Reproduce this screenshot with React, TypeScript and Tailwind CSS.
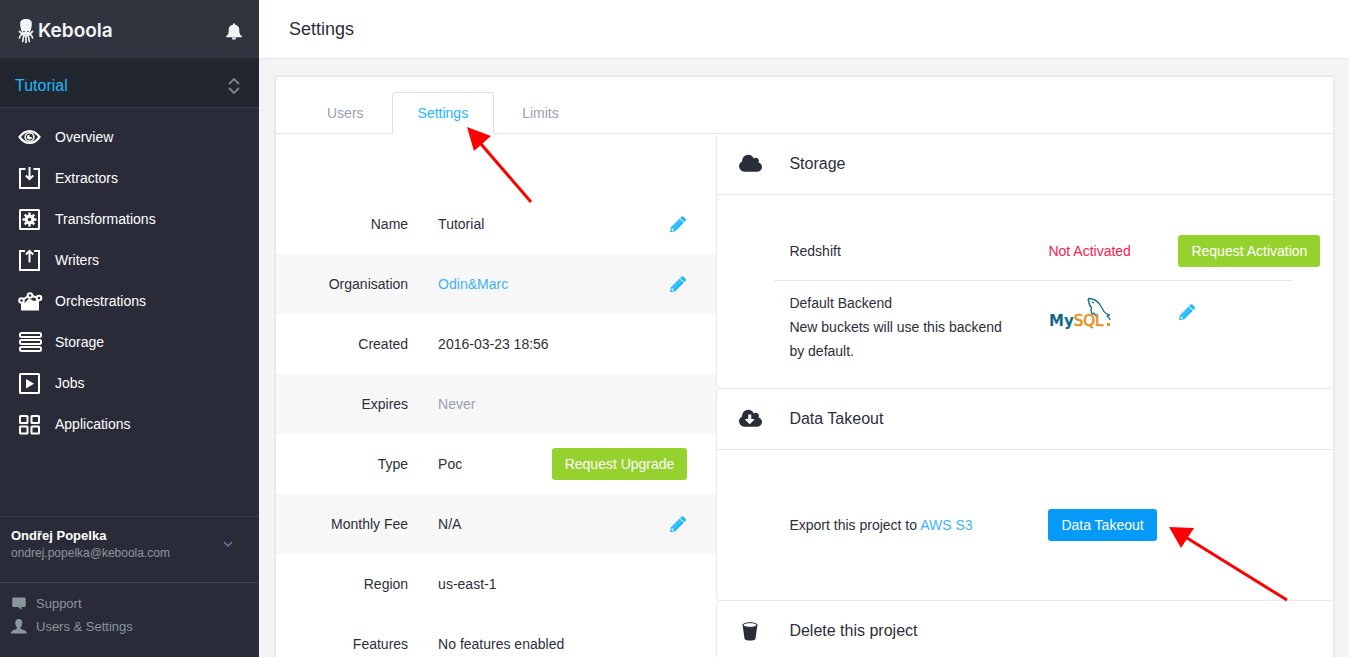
import type { ReactNode } from "react";

const cloudPath =
  "M1920 1152q0 159-112.5 271.5t-271.5 112.5h-1088q-185 0-316.5-131.5t-131.5-316.5q0-132 71-241.5t187-163.5q-2-28-2-43 0-212 150-362t362-150q158 0 286.5 88t187.5 230q70-62 166-62 106 0 181 75t75 181q0 75-41 138 129 30 213 134.5t84 239.5z";
const downArrowPath =
  "M1280 928q0-14-9-23t-23-9h-224v-352q0-13-9.5-22.5t-22.5-9.5h-192q-13 0-22.5 9.5t-9.5 22.5v352h-224q-13 0-22.5 9.5t-9.5 22.5q0 14 9 23l352 352q9 9 23 9t23-9l351-351q10-12 10-24z";

function OctopusLogo() {
  return (
    <svg width="16" height="26" viewBox="0 0 16 26" fill="none" stroke="#f4f5f7" strokeLinecap="round" aria-hidden="true">
      <path d="M8 1c4 0 5.800 1.500 5.800 4.500 0 3-.5 5-1.300 7.500l-1.500 3.500H5L3.500 13C2.700 10.500 2.200 8.500 2.200 5.500 2.200 2.500 4 1 8 1z" fill="#f4f5f7" stroke="none" />
      <path d="M1.500 13.500q1.500 2.500 4 2.500M14.500 13.500q-1.500 2.500-4 2.500M5.500 16.500q-3.500 0-4 3.500M10.500 16.500q3.500 0 4 3.500M6.500 17q-1.500 2-1.800 6.500M9.500 17q1.500 2 1.800 6.500M8 17v7.500" strokeWidth="1.700" />
      <circle cx="6" cy="13.500" r=".8" fill="#2d333e" stroke="none" />
      <circle cx="10" cy="13.500" r=".8" fill="#2d333e" stroke="none" />
    </svg>
  );
}

function BellIcon() {
  return (
    <svg width="16" height="17" viewBox="0 0 16 17" fill="#f4f5f7" aria-hidden="true">
      <path d="M7 1.800V.6h2v1.200c3 .4 4.300 2.400 4.300 5.200 0 3.500.7 4.900 2.500 6.100v1.200H.2v-1.200C2 11.900 2.700 10.500 2.700 7c0-2.800 1.300-4.800 4.300-5.200z" />
      <path d="M5.800 14.500h4.400a2.200 2.200 0 0 1-4.400 0z" />
    </svg>
  );
}

const navIcons: Record<string, ReactNode> = {
  Overview: (
    <>
      <path d="M2.500 12Q7 6 12.500 6t10 6q-4.500 6-10 6t-10-6z" strokeWidth="2.200" />
      <circle cx="12.500" cy="12" r="4.300" strokeWidth="1.600" />
      <path d="M12.500 9.500a2.500 2.500 0 1 0 2.500 2.500h-2.500z" fill="#fff" stroke="none" />
    </>
  ),
  Extractors: (
    <path d="M8.500 3H3v19h19V3h-5.500M12.500 1v12M8.800 9.500l3.700 3.700 3.700-3.700" strokeWidth="2" />
  ),
  Transformations: (
    <>
      <rect x="3" y="3" width="19" height="19" rx=".5" strokeWidth="2" />
      <circle cx="12.500" cy="12.500" r="3.300" strokeWidth="3" />
      <path d="M12.500 5.500v3M12.500 16.500v3M5.500 12.500h3M16.500 12.500h3M7.700 7.700l2 2M15.300 15.300l2 2M17.300 7.700l-2 2M9.700 15.300l-2 2" strokeWidth="2.400" />
    </>
  ),
  Writers: (
    <path d="M8 3H3v19h19V3h-5M12.500 14.500V3M8.800 6.500l3.700-3.700 3.700 3.700" strokeWidth="2" />
  ),
  Orchestrations: (
    <>
      <path d="M4 21.500v-7l4-1 4-4 5 2.500 5-1.500v11z" fill="#fff" stroke="none" />
      <g strokeWidth="2">
        <path d="M7 10l3.500-2.500M15.500 7l4 1.500" />
        <circle cx="4.500" cy="11.500" r="2.300" fill="#292c38" />
        <circle cx="13" cy="6.500" r="2.300" fill="#292c38" />
        <circle cx="22" cy="9" r="2.300" fill="#292c38" />
      </g>
    </>
  ),
  Storage: (
    <g strokeWidth="2">
      <rect x="3" y="3" width="21" height="4" rx="1.500" />
      <rect x="3" y="10" width="21" height="4" rx="1.500" />
      <rect x="3" y="17" width="21" height="4" rx="1.500" />
    </g>
  ),
  Jobs: (
    <>
      <rect x="3" y="3" width="19" height="19" rx=".5" strokeWidth="2" />
      <path d="M9 8v9.500l8-4.750z" fill="#fff" stroke="none" />
    </>
  ),
  Applications: (
    <g strokeWidth="2">
      <rect x="3" y="4" width="7.500" height="7" rx=".5" />
      <rect x="14.500" y="4" width="7.500" height="7" rx=".5" />
      <rect x="3" y="14.500" width="7.500" height="7" rx=".5" />
      <rect x="14.500" y="14.500" width="7.500" height="7" rx=".5" />
    </g>
  ),
};

function Pencil({ label }: { label: string }) {
  return (
    <button type="button" aria-label={label} className="block cursor-pointer">
      <svg width="18" height="18" viewBox="0 0 18 18" aria-hidden="true">
        <path d="M12.200 1.800Q13.300.6 14.500 1.700l2 2q1 1.100 0 2.200l-1.200 1.200-4.200-4.200zM10.500 3.500l4.200 4.200-8.500 8.600L1 17.200l1-5.100z" fill="#1eb8ff" />
        <path d="M3.500 11.800l7.200-7.200M4.900 13.200l7.200-7.200" stroke="#fff" strokeWidth=".5" opacity=".6" />
        <path d="M2.800 13.600l1.700.2.300 1.700-1.700.3-.7-.7z" fill="#fff" />
      </svg>
    </button>
  );
}

function MySqlLogo() {
  return (
    <svg width="64" height="38" viewBox="0 0 64 38" role="img" aria-label="MySQL">
      <g fill="none" stroke="#12688a" strokeWidth="1.300" strokeLinecap="round" strokeLinejoin="round">
        <path d="M49 21.500q-2-1-3-3.500-1 2-2.500 0-1-2.500 0-5.500-3-3-2.500-6-2-2.500.5-3 7 .5 11 7 2 3.500 3.500 6 1.500 2.500 5.500 3.500l-2.500 1q2 1.500 3 3.500" />
        <path d="M44.500 7l.8.800" />
      </g>
      <text x="1" y="31" fontFamily="DejaVu Sans, sans-serif" fontSize="15">
        <tspan fill="#12688a" fontWeight="700">My</tspan>
        <tspan fill="#e69122" stroke="#e69122" strokeWidth=".7">SQL</tspan>
      </text>
      <rect x="59" y="28" width="3" height="3" fill="#e69122" />
    </svg>
  );
}

function Sidebar() {
  return (
    <aside className="flex w-[259px] shrink-0 flex-col bg-[#292c38]">
      <header className="flex h-[60px] items-center justify-between border-b-2 border-[#23262f] bg-[#2f343f] pt-1 pr-[17px] pl-[18px]">
        <a href="#home" className="flex items-center gap-1 font-['Inter'] text-[19px] leading-6 font-semibold text-[#f4f5f7]">
          <OctopusLogo />
          Keboola
        </a>
        <button type="button" aria-label="Notifications"><BellIcon /></button>
      </header>
      <button type="button" className="flex h-12 items-center justify-between border-b border-[#373c48] bg-[#22262e] pt-1 pr-[18px] pl-[15px] text-base text-[#1eb8ff]">
        Tutorial
        <svg width="14" height="18" viewBox="0 0 14 18" fill="none" stroke="#7b8794" strokeWidth="1.800" aria-hidden="true">
          <path d="M2 7l5-5 5 5M2 11l5 5 5-5" />
        </svg>
      </button>
      <nav className="flex flex-1 flex-col pt-2">
        {Object.keys(navIcons).map((name) => (
          <a key={name} href={`#${name.toLowerCase()}`} className="flex h-[41px] items-center gap-3 pl-[17px] text-sm text-white">
            <svg width="26" height="24" viewBox="0 0 26 24" fill="none" stroke="#fff" aria-hidden="true">{navIcons[name]}</svg>
            {name}
          </a>
        ))}
      </nav>
      <button type="button" className="flex h-[66px] items-center justify-between border-t border-[#3a3f4a] pr-[25px] pb-3 pl-[11px] text-left">
        <span className="block">
          <span className="block text-[13px] leading-[18px] font-bold text-white">Ondřej Popelka</span>
          <span className="block text-xs leading-4 text-[#8b959c]">ondrej.popelka@keboola.com</span>
        </span>
        <svg width="12" height="8" viewBox="0 0 12 8" fill="none" stroke="#64789f" strokeWidth="1.500" aria-hidden="true"><path d="M2 2l4 4 4-4" /></svg>
      </button>
      <div className="h-[75px] border-t border-[#3a3f4a] pt-[9px] pl-[11px] text-[13px] leading-[23px] text-[#8b959c]">
        <a href="#support" className="flex items-center gap-[9px]">
          <svg width="16" height="16" viewBox="0 0 16 16" fill="#8b959c" aria-hidden="true"><path d="M2.500 1.500h11q1.200 0 1.200 1v7.500q0 1-1.200 1h-3V14l-3.500-3H2.500q-1.200 0-1.200-1V2.500q0-1 1.200-1z" /></svg>
          Support
        </a>
        <a href="#users" className="flex items-center gap-[9px]">
          <svg width="16" height="16" viewBox="0 0 16 16" fill="#8b959c" aria-hidden="true"><path d="M7.800 0c2.500 0 3.700 1.700 3.500 4-.1 2-.8 3.200-1.700 4.200 0 1.600.3 2 1.700 2.400 2.200.8 4.200 1 4.500 4H0c.2-3 2-3.200 4.300-4 1.300-.4 1.600-.8 1.600-2.400-1-1-1.600-2.200-1.700-4.200C4 1.700 5.300 0 7.800 0z" /></svg>
          Users &amp; Settings
        </a>
      </div>
    </aside>
  );
}

const link = "text-[#3eb4f5]";
const greenButton = "h-8 rounded-[3px] bg-[#96d22d] px-[13px] text-sm whitespace-nowrap text-white";

function Properties() {
  const rows: { name: string; value: ReactNode; action?: ReactNode; shaded?: boolean }[] = [
    { name: "Name", value: "Tutorial", action: <Pencil label="Edit name" /> },
    { name: "Organisation", value: <a href="#organisation" className={link}>Odin&amp;Marc</a>, action: <Pencil label="Edit organisation" />, shaded: true },
    { name: "Created", value: "2016-03-23 18:56" },
    { name: "Expires", value: <span className="text-[#9a9fb2]">Never</span>, shaded: true },
    { name: "Type", value: "Poc", action: <button type="button" className={greenButton}>Request Upgrade</button> },
    { name: "Monthly Fee", value: "N/A", action: <Pencil label="Edit monthly fee" />, shaded: true },
    { name: "Region", value: "us-east-1" },
    { name: "Features", value: "No features enabled" },
  ];
  return (
    <div className="col-span-5 pt-[60px]">
      <table className="w-full table-fixed">
        <tbody>
          {rows.map((row) => (
            <tr key={row.name} className={row.shaded ? "h-[60px] bg-[#f7f7f7]" : "h-[60px]"}>
              <th scope="row" className="w-[30%] text-right font-normal">{row.name}</th>
              <td className="pl-[30px] whitespace-nowrap">{row.value}</td>
              <td className="w-[38%] pr-[29px]"><div className="flex justify-end">{row.action}</div></td>
            </tr>
          ))}
        </tbody>
      </table>
    </div>
  );
}

function Section({ title, icon, children }: { title: string; icon: ReactNode; children?: ReactNode }) {
  return (
    <section className="rounded-sm border-b border-l border-[#e6e7eb]">
      <h2 className="flex h-[61px] items-center border-b border-[#e6e7eb] pl-[22px] text-base">
        <span className="w-[50px]">{icon}</span>
        {title}
      </h2>
      {children}
    </section>
  );
}

const columns = "grid grid-cols-[259px_130px_1fr]";

export default function App() {
  return (
    <div className="flex h-screen overflow-hidden bg-[#f4f4f7] font-['Liberation_Sans',Arial,sans-serif] text-sm text-[#2b2f3b]">
      <Sidebar />
      <main className="min-w-0 flex-1">
        <header className="flex h-[59px] items-center border-b border-[#e8e8ec] bg-white pl-[30px]">
          <h1 className="text-lg">Settings</h1>
        </header>
        <div className="mt-4 mr-[14px] ml-[15px] rounded border-2 border-[#e9e9ed] bg-white">
          <div className="flex h-[57px] items-end border-b border-[#e6e7eb] pl-[26px] text-[#9a9fb2]">
            <a href="#users" className="flex h-10 items-center pr-7 pl-[25px]">Users</a>
            <a href="#settings" className="relative -mb-px flex h-[42px] items-center rounded-t-sm border border-b-0 border-[#dedee5] bg-white px-[25px] pb-[2px] text-[#1eb8ff]">
              Settings
              <svg className="pointer-events-none absolute top-[34px] left-[73px] z-10" width="68" height="78" viewBox="0 0 68 78" aria-hidden="true">
                <path d="M1 0l24 9-17 15z" fill="#f00" />
                <path d="M15 17l50 58" stroke="#f00" strokeWidth="3" />
              </svg>
            </a>
            <a href="#limits" className="flex h-10 items-center px-7">Limits</a>
          </div>
          <div className="grid grid-cols-12">
            <Properties />
            <div className="col-span-7">
              <Section title="Storage" icon={<svg width="23" height="22" viewBox="0 0 1920 1792" fill="#292d38" aria-hidden="true"><path d={cloudPath} /></svg>}>
                <div className="pt-[26px] pr-10 pb-5 pl-[57px]">
                  <div className={`${columns} h-[60px] items-center border-b border-[#e6e7eb] pl-[15px]`}>
                    <span>Redshift</span>
                    <span className="text-[#f9214f]">Not Activated</span>
                    <button type="button" className={`${greenButton} justify-self-start`}>Request Activation</button>
                  </div>
                  <div className={`${columns} items-start pt-[10px] pb-[5px] pl-[15px]`}>
                    <p className="pr-8 leading-6">
                      Default Backend
                      <br />
                      New buckets will use this backend by default.
                    </p>
                    <div className="pt-1"><MySqlLogo /></div>
                    <div className="pt-3"><Pencil label="Edit default backend" /></div>
                  </div>
                </div>
              </Section>
              <Section title="Data Takeout" icon={<svg width="23" height="22" viewBox="0 0 1920 1792" fill="#292d38" fillRule="evenodd" aria-hidden="true"><path d={downArrowPath + cloudPath} /></svg>}>
                <div className={`${columns} h-[150px] items-center pl-[72px]`}>
                  <span>Export this project to <a href="#s3" className={link}>AWS S3</a></span>
                  <div className="relative">
                    <button type="button" className="h-8 rounded-[3px] bg-[#0599f8] px-[13px] text-sm whitespace-nowrap text-white">Data Takeout</button>
                    <svg className="pointer-events-none absolute top-[17px] left-[120px]" width="122" height="78" viewBox="0 0 122 78" aria-hidden="true">
                      <path d="M1 1l25 1-13 20z" fill="#f00" />
                      <path d="M19 12l100 62" stroke="#f00" strokeWidth="3" />
                    </svg>
                  </div>
                </div>
              </Section>
              <Section title="Delete this project" icon={
                <svg width="22" height="20" viewBox="0 0 22 20" aria-hidden="true">
                  <path d="M3.500 3.500l2 14q.4 2 5.500 2t5.500-2l2-14z" fill="#292d38" />
                  <ellipse cx="11" cy="4" rx="7" ry="2.300" fill="#fff" stroke="#292d38" />
                </svg>
              } />
            </div>
          </div>
        </div>
      </main>
    </div>
  );
}
